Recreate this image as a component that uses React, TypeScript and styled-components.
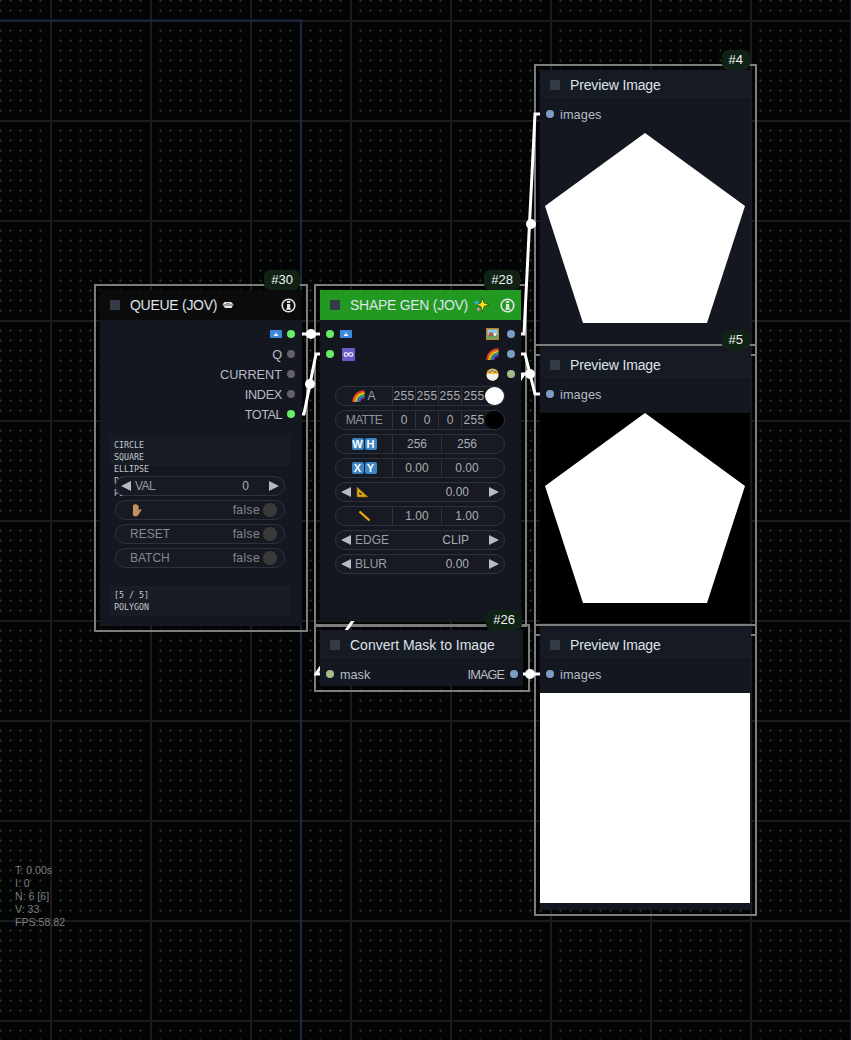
import React from "react";
import styled, { createGlobalStyle } from "styled-components";

const Global = createGlobalStyle`
  html, body { margin: 0; padding: 0; background: #030404; }
  #root { width: 851px; height: 1040px; overflow: hidden; }
  * { box-sizing: border-box; }
`;

const Canvas = styled.div`
  position: relative;
  width: 851px;
  height: 1040px;
  overflow: hidden;
  font-family: "Liberation Sans", Arial, sans-serif;
  background: #030404;
`;

const Layer = styled.svg`
  position: absolute;
  left: 0;
  top: 0;
  pointer-events: none;
`;

const NodeBox = styled.div<{ $x: number; $y: number; $w: number; $h: number }>`
  position: absolute;
  isolation: isolate;
  left: ${(p) => p.$x}px;
  top: ${(p) => p.$y}px;
  width: ${(p) => p.$w}px;
  height: ${(p) => p.$h}px;
  display: flex;
  flex-direction: column;
  background: #141720;
`;

const Outline = styled.div<{ $right?: number }>`
  position: absolute;
  left: -6px;
  top: -6px;
  bottom: -6px;
  right: ${(p) => p.$right ?? -6}px;
  border: 2px solid #7d7d7d;
  pointer-events: none;
  z-index: -1;
`;

const Badge = styled.div<{ $right?: number }>`
  position: absolute;
  right: ${(p) => p.$right ?? 1}px;
  top: -20px;
  height: 20px;
  padding: 0 7px;
  border-radius: 6px;
  background: #102214;
  color: #f2f2f2;
  font-size: 13px;
  line-height: 20px;
`;

const TitleBar = styled.div<{ $bg?: string }>`
  height: 30px;
  flex: none;
  display: flex;
  align-items: center;
  padding-left: 10px;
  background: ${(p) => p.$bg ?? "#161a23"};
  border-bottom: ${(p) => (p.$bg ? "none" : "1px solid #10131a")};
  color: #dfe3ea;
  font-size: 14px;
`;

const TitleText = styled.span<{ $ls?: number }>`
  letter-spacing: ${(p) => p.$ls ?? 0}px;
`;

const Square = styled.span`
  width: 10px;
  height: 10px;
  background: #343b46;
  margin-right: 10px;
  flex: none;
`;

const TitleIcon = styled.span`
  display: inline-flex;
  margin-left: 5px;
`;

const InfoIcon = styled.span`
  margin-left: auto;
  margin-right: 6px;
  display: inline-flex;
`;

const Slots = styled.div`
  padding-top: 4px;
  flex: none;
`;

const SlotRow = styled.div<{ $out?: boolean; $pad?: number; $gap?: number }>`
  height: 20px;
  display: flex;
  align-items: center;
  justify-content: ${(p) => (p.$out ? "flex-end" : "flex-start")};
  gap: ${(p) => p.$gap ?? (p.$out ? 5 : 6)}px;
  padding: 0 ${(p) => (p.$out ? p.$pad ?? 7 : 0)}px 0 ${(p) => (p.$out ? 0 : p.$pad ?? 6)}px;
  color: #b8bcc4;
  font-size: 12.7px;
`;

const SlotSplit = styled.div<{ $r: number }>`
  height: 20px;
  display: flex;
  align-items: center;
  justify-content: space-between;
  padding: 0 ${(p) => p.$r}px 0 6px;
  color: #b8bcc4;
  font-size: 12.7px;
`;

const SlotSide = styled.span<{ $gap?: number }>`
  display: flex;
  align-items: center;
  gap: ${(p) => p.$gap ?? 6}px;
`;

const SlotText = styled.span<{ $ls?: number }>`
  padding-top: 2px;
  letter-spacing: ${(p) => p.$ls ?? 0}px;
`;

const Dot = styled.span<{ $c: string }>`
  width: 8px;
  height: 8px;
  flex: none;
  border-radius: 50%;
  background: ${(p) => p.$c};
`;

const Pills = styled.div<{ $l: number; $r: number; $mt: number }>`
  display: flex;
  flex-direction: column;
  gap: 4px;
  margin: ${(p) => p.$mt}px ${(p) => p.$r}px 0 ${(p) => p.$l}px;
  position: relative;
`;

const Pill = styled.div`
  height: 20px;
  position: relative;
  display: flex;
  align-items: center;
  border: 1px solid #2d323b;
  border-radius: 10px;
  background: #171a22;
  color: #a9acb2;
  font-size: 12px;
  white-space: nowrap;
`;

const Cell = styled.span<{ $w: number; $end?: boolean }>`
  height: 100%;
  display: flex;
  align-items: center;
  justify-content: center;
  gap: 1px;
  flex: 0 0 ${(p) => p.$w}px;
  border-right: ${(p) => (p.$end ? "none" : "1px solid #2d323b")};
`;

const Num = styled.span`
  letter-spacing: 0.25px;
`;

const Matte = styled.span`
  letter-spacing: -0.7px;
  color: #8d9096;
`;

const Swatch = styled.span<{ $c: string }>`
  position: absolute;
  right: 0;
  top: 0;
  width: 19px;
  height: 18px;
  border-radius: 50%;
  background: ${(p) => p.$c};
`;

const Arrow = styled.span<{ $right?: boolean }>`
  width: 0;
  height: 0;
  flex: none;
  border-top: 5.5px solid transparent;
  border-bottom: 5.5px solid transparent;
  ${(p) => (p.$right ? "border-left: 10px solid #b4bac6;" : "border-right: 10px solid #b4bac6;")}
`;

const ArrowRow = styled(Pill)`
  padding: 0 5.5px 0 5px;
`;

const Label = styled.span<{ $tight?: boolean; $ml?: number; $c?: string }>`
  display: inline-flex;
  margin-left: ${(p) => p.$ml ?? 4}px;
  letter-spacing: ${(p) => (p.$tight ? "-0.6px" : "0")};
  color: ${(p) => p.$c ?? "#9a9da3"};
`;

const Value = styled.span`
  margin-left: auto;
  margin-right: 19.5px;
`;

const ToggleRow = styled(Pill)`
  padding: 0 7px 0 14px;
`;

const HandWrap = styled.span`
  display: inline-flex;
  margin-left: 1px;
`;

const FalseText = styled.span`
  margin-left: auto;
  margin-right: 3px;
  color: #85888e;
  letter-spacing: 0.4px;
`;

const Knob = styled.span`
  width: 14px;
  height: 14px;
  border-radius: 50%;
  background: #3a3a3a;
`;

const Keys = styled.span`
  display: flex;
  gap: 1px;
`;

const Key = styled.span`
  width: 12px;
  height: 12px;
  border-radius: 2px;
  background: #3b86c6;
  color: #fff;
  font-size: 11px;
  font-weight: 700;
  line-height: 12px;
  text-align: center;
`;

const TextBlock = styled.div<{ $mt: number }>`
  flex: none;
  height: 30px;
  margin: ${(p) => p.$mt}px 12px 0 10px;
  padding: 3px 4px;
  background: #181c25;
  color: #c6c9cf;
  font-family: "DejaVu Sans Mono", monospace;
  font-size: 8.3px;
  line-height: 12px;
  white-space: pre;
`;

const ImageArea = styled.div<{ $bg: string }>`
  margin-top: 9px;
  height: 210px;
  width: 210px;
  flex: none;
  background: ${(p) => p.$bg};
`;

const Pentagon = styled.svg`
  display: block;
`;

const Stats = styled.div`
  position: absolute;
  left: 15px;
  top: 864px;
  color: #7c7e81;
  font-size: 10.6px;
  line-height: 13px;
  white-space: pre;
`;

const Boat = () => (
  <svg width="12" height="8" viewBox="0 0 12 8">
    <path d="M0.5 3.5 L2.5 1 H9 L11.5 3.5 L9.5 7 H3 Z" fill="#e8e8e8" />
    <path d="M0.5 4 H11.5" stroke="#555" strokeWidth="1" />
    <path d="M4 2.5 H8" stroke="#888" strokeWidth="1" />
  </svg>
);

const BlueTag = () => (
  <svg width="12" height="8" viewBox="0 0 12 8">
    <rect width="12" height="8" fill="#3c86dc" />
    <path d="M3.5 4.5 H8.5 L7.7 6 H4.3 Z M5.5 2.5 H6.5 V4.5 H5.5 Z" fill="#fff" />
  </svg>
);

const Info = () => (
  <svg width="15" height="15" viewBox="0 0 15 15">
    <circle cx="7.5" cy="7.5" r="6.3" fill="none" stroke="#e4e4e4" strokeWidth="1.6" />
    <rect x="6" y="6" width="3.2" height="5.5" fill="#e4e4e4" />
    <rect x="5" y="10.5" width="5.2" height="1.2" fill="#e4e4e4" />
    <rect x="6" y="3" width="3.2" height="2" fill="#e4e4e4" />
  </svg>
);

const Sparkles = () => (
  <svg width="16" height="16" viewBox="0 0 16 16">
    <path d="M9.5 1 L11 6 L16 7.5 L11 9.5 L9.5 15 L8 9.5 L3.5 7.5 L8 6 Z" fill="#ffe01a" stroke="#222" strokeWidth="0.5" />
    <path d="M3.5 2.5 L4.5 4.7 L6.5 5.5 L4.5 6.4 L3.5 8.5 L2.6 6.4 L0.5 5.5 L2.6 4.7 Z" fill="#29b6e8" />
    <path d="M5.5 10 L6.2 11.6 L8 12.3 L6.2 13 L5.5 15 L4.7 13 L3 12.3 L4.7 11.6 Z" fill="#f08bc0" />
  </svg>
);

const Frame = () => (
  <svg width="13" height="12" viewBox="0 0 13 12">
    <rect width="13" height="12" fill="#b5832a" />
    <rect x="1.5" y="1.5" width="10" height="9" fill="#8ccbea" />
    <rect x="1.5" y="7" width="10" height="3.5" fill="#5fa456" />
    <rect x="3" y="4.5" width="4" height="3.5" fill="#c9503f" />
    <rect x="8" y="5" width="2" height="3" fill="#e8e8e8" />
  </svg>
);

const Rainbow = () => (
  <svg width="13" height="12" viewBox="0 0 13 12" fill="none" strokeWidth="1.4">
    <path d="M1 12 A11 11 0 0 1 12.5 1" stroke="#e53935" />
    <path d="M2.4 12 A9.6 9.6 0 0 1 12.5 2.4" stroke="#fb8c00" />
    <path d="M3.8 12 A8.2 8.2 0 0 1 12.5 3.8" stroke="#fdd835" />
    <path d="M5.2 12 A6.8 6.8 0 0 1 12.5 5.2" stroke="#43a047" />
    <path d="M6.6 12 A5.4 5.4 0 0 1 12.5 6.6" stroke="#1e88e5" />
    <path d="M8 12 A4 4 0 0 1 12.5 8" stroke="#8e24aa" />
  </svg>
);

const MaskFace = () => (
  <svg width="13" height="13" viewBox="0 0 13 13">
    <circle cx="6.5" cy="6.5" r="6" fill="#f9c23c" />
    <path d="M0.8 6 H12.2 V9 Q10 12.8 6.5 12.8 Q3 12.8 0.8 9 Z" fill="#f4f4f4" />
    <path d="M2.5 4.3 Q3.7 3 5 4.3 M8 4.3 Q9.3 3 10.5 4.3" stroke="#5a3b12" fill="none" strokeWidth="0.9" />
    <path d="M6.5 0.5 L8 3 A1.6 1.6 0 0 1 5 3 Z" fill="#4aa6e8" />
  </svg>
);

const InfinityBox = () => (
  <svg width="13" height="13" viewBox="0 0 13 13">
    <rect width="13" height="13" rx="1" fill="#6c5acb" />
    <path d="M6.5 6.5 C5 4 2.2 4.2 2.2 6.5 C2.2 8.8 5 9 6.5 6.5 C8 4 10.8 4.2 10.8 6.5 C10.8 8.8 8 9 6.5 6.5 Z" fill="none" stroke="#e8e6f8" strokeWidth="1.3" />
  </svg>
);

const Hand = () => (
  <svg width="11" height="14" viewBox="0 0 11 14">
    <path d="M2 5 V2.5 A.7.7 0 0 1 3.4 2.5 V1.4 A.7.7 0 0 1 4.9 1.4 V2 A.7.7 0 0 1 6.3 2 V3 A.7.7 0 0 1 7.7 3 V7.5 L9 6.3 A.8.8 0 0 1 10.2 7.4 L7.6 11.5 Q6.5 13.5 4.5 13.5 Q1.8 13.5 1.8 10.5 Z" fill="#c2905f" />
  </svg>
);

const SetSquare = () => (
  <svg width="13" height="12" viewBox="0 0 13 12">
    <path d="M1 1 V11 H12 Z" fill="#e8a914" stroke="#7a5a10" strokeWidth="0.7" />
    <path d="M3.3 6 V8.8 H6.5 Z" fill="#171a22" />
  </svg>
);

const GoldLine = () => (
  <svg width="13" height="12" viewBox="0 0 13 12">
    <path d="M1.5 1.5 L11.5 10.5" stroke="#4a3608" strokeWidth="3" />
    <path d="M1.5 1.5 L11.5 10.5" stroke="#f0ae16" strokeWidth="1.8" />
  </svg>
);

const Shape = ({ bg }: { bg: string }) => (
  <Pentagon width="210" height="210" viewBox="0 0 210 210">
    <rect width="210" height="210" fill={bg} />
    <path d="M105 0 L205 73 L167 190 L43 190 L5 73 Z" fill="#fff" />
  </Pentagon>
);

const wires = [
  "M295 334 H302 L320 334 H326",
  "M296 414 H304 L316 354 H326",
  "M515 334 H524 L535 114 H546",
  "M515 354 H525 L535 394 H546",
  "M515 374 H524 L316 674 H326",
  "M518 674 H526 L534 674 H546",
];

const joints: [number, number][] = [
  [311, 334],
  [310, 384],
  [531, 224],
  [530, 374],
  [530, 674],
];

/* the parts of the canvas that no node body covers, where links show above the selection outlines */
const linkGaps = [
  [302, 284, 18, 346],
  [521, 64, 19, 566],
  [523, 630, 17, 70],
  [314, 630, 6, 60],
  [314, 621, 209, 9],
];

const tileSteps = [10, 20, 30, 40, 50, 60, 70, 80, 90];

const PreviewSlots = () => (
  <Slots>
    <SlotRow>
      <Dot $c="#7a9ec4" />
      <SlotText $ls={0.1}>images</SlotText>
    </SlotRow>
  </Slots>
);

export default function App() {
  return (
    <Canvas>
      <Global />
      <Layer width="851" height="1040">
        <defs>
          <pattern id="tile" width="100" height="100" patternUnits="userSpaceOnUse" x="50" y="20">
            <rect x="0" y="0" width="2" height="100" fill="#1b1c20" />
            <rect x="0" y="0" width="100" height="2" fill="#1b1c20" />
            {tileSteps.map((x) =>
              tileSteps.map((y) => (
                <g key={`${x}-${y}`} fill="#28292a">
                  <rect x={x - 1} y={y} width="3" height="1" />
                  <rect x={x} y={y - 1} width="1" height="3" />
                </g>
              ))
            )}
          </pattern>
        </defs>
        <rect width="851" height="1040" fill="url(#tile)" />
        <path d="M0 20.5 H301 V1040" fill="none" stroke="#1b2840" strokeWidth="2" />
      </Layer>

      <NodeBox $x={100} $y={290} $w={202} $h={336}>
        <Outline />
        <Badge $right={2}>#30</Badge>
        <TitleBar $bg="#0b0b0c">
          <Square />
          <TitleText $ls={-0.28}>QUEUE (JOV)</TitleText>
          <TitleIcon>
            <Boat />
          </TitleIcon>
          <InfoIcon>
            <Info />
          </InfoIcon>
        </TitleBar>
        <Slots>
          <SlotRow $out>
            <BlueTag />
            <Dot $c="#66ee66" />
          </SlotRow>
          <SlotRow $out>
            <SlotText>Q</SlotText>
            <Dot $c="#625e6a" />
          </SlotRow>
          <SlotRow $out>
            <SlotText>CURRENT</SlotText>
            <Dot $c="#625e6a" />
          </SlotRow>
          <SlotRow $out>
            <SlotText $ls={-0.3}>INDEX</SlotText>
            <Dot $c="#625e6a" />
          </SlotRow>
          <SlotRow $out>
            <SlotText $ls={-0.5}>TOTAL</SlotText>
            <Dot $c="#66ee66" />
          </SlotRow>
        </Slots>
        <TextBlock $mt={12}>{"CIRCLE\nSQUARE\nELLIPSE\nPOLYGON\nPOLYGON"}</TextBlock>
        <Pills $l={15} $r={17} $mt={10}>
          <ArrowRow>
            <Arrow />
            <Label $tight>VAL</Label>
            <Value>0</Value>
            <Arrow $right />
          </ArrowRow>
          <ToggleRow>
            <HandWrap>
              <Hand />
            </HandWrap>
            <FalseText>false</FalseText>
            <Knob />
          </ToggleRow>
          <ToggleRow>
            <Label $ml={0} $c="#85888e">RESET</Label>
            <FalseText>false</FalseText>
            <Knob />
          </ToggleRow>
          <ToggleRow>
            <Label $ml={0} $c="#85888e">BATCH</Label>
            <FalseText>false</FalseText>
            <Knob />
          </ToggleRow>
        </Pills>
        <TextBlock $mt={18}>{"[5 / 5]\nPOLYGON"}</TextBlock>
      </NodeBox>

      <NodeBox $x={320} $y={290} $w={201} $h={331}>
        <Outline />
        <Badge>#28</Badge>
        <TitleBar $bg="#229a22">
          <Square />
          <TitleText $ls={-0.28}>SHAPE GEN (JOV)</TitleText>
          <TitleIcon>
            <Sparkles />
          </TitleIcon>
          <InfoIcon>
            <Info />
          </InfoIcon>
        </TitleBar>
        <Slots>
          <SlotSplit $r={6}>
            <SlotSide>
              <Dot $c="#66ee66" />
              <BlueTag />
            </SlotSide>
            <SlotSide $gap={8}>
              <Frame />
              <Dot $c="#7a9ec4" />
            </SlotSide>
          </SlotSplit>
          <SlotSplit $r={6}>
            <SlotSide $gap={8}>
              <Dot $c="#66ee66" />
              <InfinityBox />
            </SlotSide>
            <SlotSide $gap={8}>
              <Rainbow />
              <Dot $c="#7a9ec4" />
            </SlotSide>
          </SlotSplit>
          <SlotRow $out $pad={6} $gap={8}>
            <MaskFace />
            <Dot $c="#a4bb8c" />
          </SlotRow>
        </Slots>
        <Pills $l={15} $r={16} $mt={2}>
          <Pill>
            <Cell $w={57}>
              <Rainbow />
              <Label $ml={1}>A</Label>
            </Cell>
            <Cell $w={23}><Num>255</Num></Cell>
            <Cell $w={23}><Num>255</Num></Cell>
            <Cell $w={23}><Num>255</Num></Cell>
            <Cell $end $w={24}><Num>255</Num></Cell>
            <Swatch $c="#ffffff" />
          </Pill>
          <Pill>
            <Cell $w={57}><Matte>MATTE</Matte></Cell>
            <Cell $w={23}>0</Cell>
            <Cell $w={23}>0</Cell>
            <Cell $w={23}>0</Cell>
            <Cell $end $w={24}><Num>255</Num></Cell>
            <Swatch $c="#000000" />
          </Pill>
          <Pill>
            <Cell $w={57}>
              <Keys>
                <Key>W</Key>
                <Key>H</Key>
              </Keys>
            </Cell>
            <Cell $w={49}>256</Cell>
            <Cell $end $w={50}>256</Cell>
          </Pill>
          <Pill>
            <Cell $w={57}>
              <Keys>
                <Key>X</Key>
                <Key>Y</Key>
              </Keys>
            </Cell>
            <Cell $w={49}>0.00</Cell>
            <Cell $end $w={50}>0.00</Cell>
          </Pill>
          <ArrowRow>
            <Arrow />
            <Label $ml={5}>
              <SetSquare />
            </Label>
            <Value>0.00</Value>
            <Arrow $right />
          </ArrowRow>
          <Pill>
            <Cell $w={57}>
              <GoldLine />
            </Cell>
            <Cell $w={49}>1.00</Cell>
            <Cell $end $w={50}>1.00</Cell>
          </Pill>
          <ArrowRow>
            <Arrow />
            <Label>EDGE</Label>
            <Value>CLIP</Value>
            <Arrow $right />
          </ArrowRow>
          <ArrowRow>
            <Arrow />
            <Label>BLUR</Label>
            <Value>0.00</Value>
            <Arrow $right />
          </ArrowRow>
        </Pills>
      </NodeBox>

      <NodeBox $x={320} $y={630} $w={203} $h={56}>
        <Outline $right={-7} />
        <Badge>#26</Badge>
        <TitleBar>
          <Square />
          <TitleText>Convert Mask to Image</TitleText>
        </TitleBar>
        <Slots>
          <SlotSplit $r={5}>
            <SlotSide>
              <Dot $c="#a4bb8c" />
              <SlotText>mask</SlotText>
            </SlotSide>
            <SlotSide>
              <SlotText $ls={-0.9}>IMAGE</SlotText>
              <Dot $c="#7a9ec4" />
            </SlotSide>
          </SlotSplit>
        </Slots>
      </NodeBox>

      <NodeBox $x={540} $y={70} $w={211} $h={280}>
        <Outline />
        <Badge>#4</Badge>
        <TitleBar>
          <Square />
          <TitleText $ls={-0.15}>Preview Image</TitleText>
        </TitleBar>
        <PreviewSlots />
        <ImageArea $bg="transparent">
          <Shape bg="transparent" />
        </ImageArea>
      </NodeBox>

      <NodeBox $x={540} $y={350} $w={211} $h={280}>
        <Outline />
        <Badge>#5</Badge>
        <TitleBar>
          <Square />
          <TitleText $ls={-0.15}>Preview Image</TitleText>
        </TitleBar>
        <PreviewSlots />
        <ImageArea $bg="#000">
          <Shape bg="#000" />
        </ImageArea>
      </NodeBox>

      <NodeBox $x={540} $y={630} $w={211} $h={280}>
        <Outline />
        <TitleBar>
          <Square />
          <TitleText $ls={-0.15}>Preview Image</TitleText>
        </TitleBar>
        <PreviewSlots />
        <ImageArea $bg="#fff" />
      </NodeBox>

      <Layer width="851" height="1040">
        <defs>
          <clipPath id="linkGaps">
            {linkGaps.map(([x, y, w, h]) => (
              <rect key={`${x}-${y}`} x={x} y={y} width={w} height={h} />
            ))}
          </clipPath>
        </defs>
        <g clipPath="url(#linkGaps)">
          {wires.map((d) => (
            <path key={d} d={d} fill="none" stroke="#fff" strokeWidth="3" />
          ))}
          {joints.map(([x, y]) => (
            <circle key={`${x}-${y}`} cx={x} cy={y} r="5" fill="#fff" />
          ))}
        </g>
      </Layer>

      <Stats>{"T: 0.00s\nI: 0\nN: 6 [6]\nV: 33\nFPS:58.82"}</Stats>
    </Canvas>
  );
}
